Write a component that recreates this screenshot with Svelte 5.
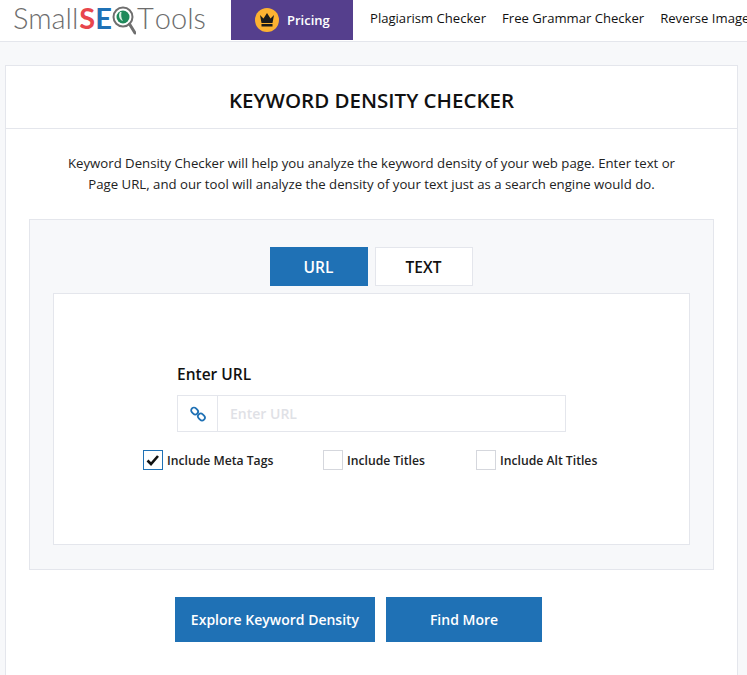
<script>
	let tab = 'url'
	const links = ['Plagiarism Checker', 'Free Grammar Checker', 'Reverse Image Search']
	const options = [
		{ label: 'Include Meta Tags', checked: true },
		{ label: 'Include Titles', checked: false },
		{ label: 'Include Alt Titles', checked: false }
	]
</script>

<header class="topbar">
	<a class="logo" href="#top">
		<span>Small</span><span class="logo-s">S</span><span class="logo-e">E</span>
		<svg class="logo-q" viewBox="0 0 24 30" width="24" height="30">
			<circle cx="11" cy="11" r="9.500" fill="#fff" stroke="#6f6f6f" stroke-width="2" />
			<circle cx="11" cy="11" r="6.500" fill="#1f8a5b" />
			<path d="M8 6c-2 3-1 8 3 9-2-3-2-6-1.500-9z" fill="#d8efe3" />
			<path d="M17.500 18l5.500 9" stroke="#6f6f6f" stroke-width="3" stroke-linecap="round" />
		</svg>
		<span class="logo-t">T</span><span>ools</span>
	</a>
	<a class="pricing" href="#top">
		<span class="crown">
			<svg viewBox="0 0 16 14" width="16" height="14">
				<path d="M1 2l3.500 3.500L8 0l3.500 5.500L15 2l-1.500 8h-11z" fill="#1b1b1b" />
				<rect x="2.500" y="11" width="11" height="2.500" fill="#1b1b1b" />
			</svg>
		</span>
		Pricing
	</a>
	<nav class="nav">
		{#each links as link}
			<a href="#top">{link}</a>
		{/each}
	</nav>
</header>

<main class="page">
	<section class="card">
		<h1>KEYWORD DENSITY CHECKER</h1>
		<p class="intro">
			Keyword Density Checker will help you analyze the keyword density of your web page. Enter text or<br />
			Page URL, and our tool will analyze the density of your text just as a search engine would do.
		</p>

		<div class="panel">
			<div class="tabs">
				<button class="tab" class:active={tab === 'url'} onclick={() => (tab = 'url')}>URL</button>
				<button class="tab" class:active={tab === 'text'} onclick={() => (tab = 'text')}>TEXT</button>
			</div>
			<div class="box">
				<label class="field-label" for="url">Enter URL</label>
				<div class="input-group">
					<span class="addon">
						<svg viewBox="0 0 16 16" width="16" height="16" fill="none" stroke="#1f71b5" stroke-width="1.800">
							<rect x="0.900" y="2.200" width="7.400" height="5.600" rx="2.800" transform="rotate(45 4.600 5)" />
							<rect x="7.700" y="8.200" width="7.400" height="5.600" rx="2.800" transform="rotate(45 11.400 11)" />
						</svg>
					</span>
					<input id="url" type="text" placeholder="Enter URL" />
				</div>
				<div class="options">
					{#each options as opt}
						<label class="option">
							<span class="check" class:on={opt.checked}>
								{#if opt.checked}
									<svg viewBox="0 0 18 18" width="18" height="18" fill="none" stroke="#111" stroke-width="2.600">
										<path d="M3.500 9.500l3.500 3.500 7-8" />
									</svg>
								{/if}
							</span>
							{opt.label}
						</label>
					{/each}
				</div>
			</div>
		</div>

		<div class="actions">
			<button class="action wide">Explore Keyword Density</button>
			<button class="action">Find More</button>
		</div>
	</section>
</main>

<style>
:global(body) {
	background: #f7f8fa;
	font-family: "Open Sans", "Noto Sans", sans-serif;
	color: #111;
	overflow: hidden;
}

a {
	color: inherit;
	text-decoration: none;
}

.topbar {
	display: flex;
	height: 41px;
	background: #fff;
	border-bottom: 1px solid #e4e6ec;
	overflow: hidden;
	white-space: nowrap;
}

.logo {
	display: flex;
	flex: none;
	align-items: center;
	width: 231px;
	padding: 0 0 6px 13px;
	box-sizing: border-box;
	font-family: Lato, sans-serif;
	font-weight: 300;
	font-size: 29px;
	color: #6d6d6d;
}

.logo-s {
	color: #e8464c;
	font-weight: 700;
	margin-left: 1px;
}

.logo-e {
	color: #1f71b5;
	font-weight: 700;
}

.logo-q {
	margin: 6px 1px 0 0;
	flex: none;
}

.logo-t {
	margin-right: 1px;
}

.pricing {
	display: flex;
	flex: none;
	align-items: center;
	gap: 8px;
	width: 122px;
	height: 40px;
	padding-left: 24px;
	box-sizing: border-box;
	background: #553f8d;
	color: #fff;
	font-size: 13px;
	font-weight: 600;
}

.crown {
	display: flex;
	align-items: center;
	justify-content: center;
	width: 24px;
	height: 24px;
	border-radius: 50%;
	background: #fdb231;
}

.nav {
	display: flex;
	flex: none;
	gap: 16px;
	align-items: center;
	height: 36px;
	padding-left: 17px;
	font-size: 13.100px;
	font-weight: 500;
	color: #111;
}

.page {
	padding: 23px 9px 0 5px;
}

.card {
	background: #fff;
	border: 1px solid #e4e6ec;
	border-bottom: 0;
	height: 610px;
}

h1 {
	margin: 0;
	height: 62px;
	line-height: 68px;
	border-bottom: 1px solid #e4e6ec;
	text-align: center;
	font-size: 20.500px;
	font-weight: 600;
	color: #111;
}

.intro {
	margin: 24px 0 0;
	text-align: center;
	font-size: 13.200px;
	line-height: 21px;
	color: #222;
}

.panel {
	margin: 24px 23px 0;
	height: 351px;
	box-sizing: border-box;
	padding: 27px 23px 0;
	background: #f7f8fa;
	border: 1px solid #e4e6ec;
}

.tabs {
	display: flex;
	justify-content: center;
	gap: 7px;
	margin-left: -1px;
}

.tab {
	width: 98px;
	height: 39px;
	padding: 0;
	background: #fff;
	border: 1px solid #e4e6ec;
	font: 600 15.500px "Open Sans", sans-serif;
	color: #111;
}

.tab.active {
	background: #1f71b5;
	border-color: #1f71b5;
	color: #fff;
}

.box {
	margin-top: 7px;
	height: 252px;
	box-sizing: border-box;
	padding: 69px 0 0 123px;
	background: #fff;
	border: 1px solid #e4e6ec;
}

.field-label {
	display: block;
	font-size: 15.500px;
	font-weight: 600;
	line-height: 22px;
	color: #111;
}

.input-group {
	display: flex;
	width: 387px;
	height: 35px;
	margin-top: 10px;
	border: 1px solid #e4e6ec;
}

.addon {
	display: flex;
	align-items: center;
	justify-content: center;
	width: 39px;
	border-right: 1px solid #e4e6ec;
}

input {
	flex: 1;
	min-width: 0;
	padding: 0 12px;
	border: 0;
	outline: 0;
	font: 600 14px "Open Sans", sans-serif;
}

input::placeholder {
	color: #dfe1e6;
}

.options {
	display: flex;
	margin: 18px 0 0 -34px;
}

.option {
	display: flex;
	align-items: center;
	gap: 4px;
	font-size: 12.200px;
	font-weight: 600;
	color: #222;
}

.option:nth-child(1) {
	width: 180px;
}

.option:nth-child(2) {
	width: 153px;
}

.check {
	width: 18px;
	height: 18px;
	background: #fff;
	border: 1px solid #d5d7dd;
}

.check.on {
	border-color: #1f71b5;
}

.check svg {
	display: block;
}

.actions {
	display: flex;
	gap: 11px;
	margin-top: 27px;
	padding-left: 169px;
}

.action {
	width: 156px;
	height: 45px;
	padding: 0;
	border: 0;
	background: #1f71b5;
	color: #fff;
	font: 600 14px "Open Sans", sans-serif;
}

.action.wide {
	width: 200px;
}
</style>
